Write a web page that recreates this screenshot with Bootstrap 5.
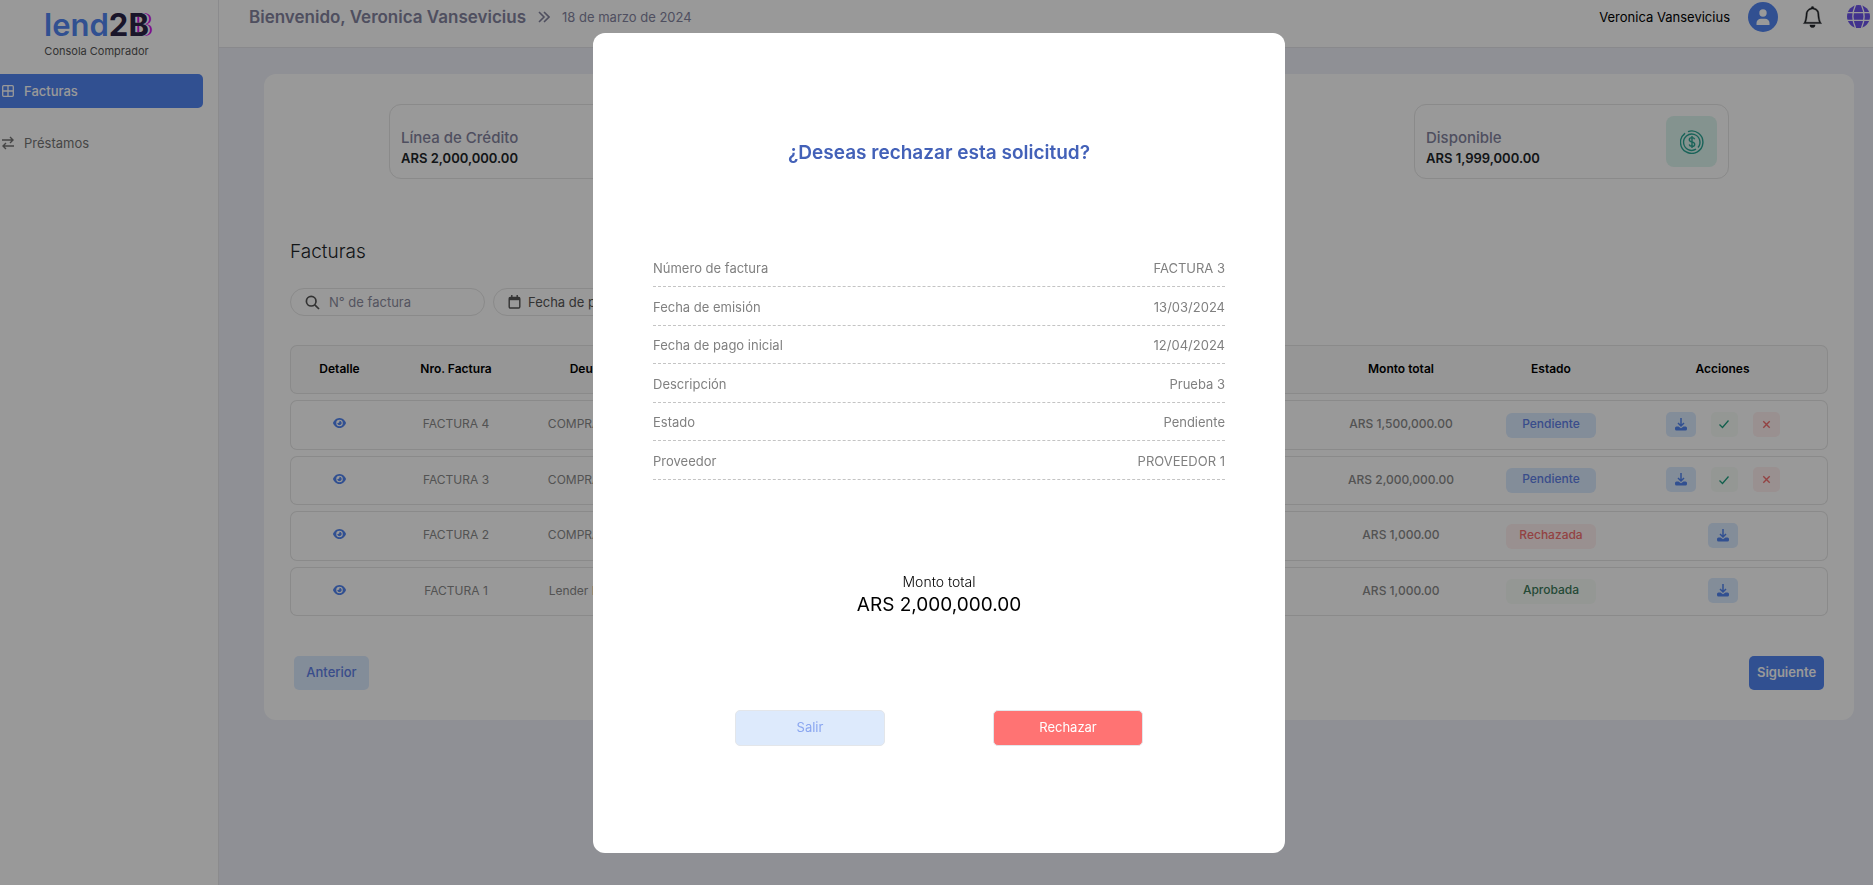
<!DOCTYPE html>
<html lang="es">
<head>
<meta charset="utf-8">
<meta name="viewport" content="width=device-width, initial-scale=1">
<title>lend2B - Consola Comprador</title>
<link href="https://cdn.jsdelivr.net/npm/bootstrap@5.3.0/dist/css/bootstrap.min.css" rel="stylesheet">
<style>
  :root { --brand: #5285f2; --soft: #dbebff; --line: #e6e6e6; --muted: #84849f; --text: #8a8a8a; }
  body { font-family: Inter, "Liberation Sans", sans-serif; font-size: 13px; line-height: 20px; background: #eff1f8; color: #212529; overflow: hidden; }
  svg { display: block; flex: none; }
  a { text-decoration: none; }

  .side-panel { width: 219px; background: #fff; border-right: 1px solid #e8e8ec; }
  .brand-box { padding: 8px 25px 0 0; }
  .brand-name { font-size: 31px; line-height: 34px; font-weight: 600; color: var(--brand); }
  .brand-two { color: #2b2346; font-weight: 700; }
  .brand-b { text-shadow: 2px 0 #fff, 4px 0 #d312e8; }
  .brand-sub { font-size: 11px; line-height: 18px; font-weight: 400; color: #555; }
  .side-nav { margin-top: 14px; gap: 18px; }
  .side-link { height: 34px; width: 203px; padding-left: 2px; gap: 10px; border-radius: 0 5px 5px 0; color: #757575; }
  .side-link.active { background: var(--brand); color: #fff; font-weight: 500; }

  .top-bar { height: 48px; padding: 0 3px 14px 30px; background: #fff; border-bottom: 1px solid #e4e4ea; color: var(--muted); }
  .welcome { font-size: 17px; font-weight: 600; }
  .crumb { gap: 12px; }
  .account { gap: 18px; }
  .icon-btn { background: none; border: 0; padding: 0; }
  .avatar { width: 30px; height: 30px; background: var(--brand); color: #fff; }

  .board { margin: 26px 19px 0 45px; padding: 30px 26px; border-radius: 12px; background: #fff; }
  .stats { padding: 0 99px; margin-bottom: 59px; }
  .stat { width: 315px; height: 75px; padding: 0 11px; border: 1px solid var(--line); border-radius: 12px; }
  .stat-text { padding-top: 12px; }
  .stat-name { font-size: 15px; font-weight: 500; color: var(--muted); }
  .stat-sum { font-weight: 600; }
  .stat-icon { width: 51px; height: 51px; border-radius: 8px; background: #dcf5ee; color: #2aa594; }
  .board-title { font-size: 19px; line-height: 28px; font-weight: 300; margin-bottom: 22px; }
  .pill { height: 28px; border: 1px solid var(--line); border-radius: 14px; background: #fff; padding: 0 14px; gap: 7px; color: #555; }
  .pill input { border: 0; outline: 0; background: none; min-width: 0; padding: 0; }
  .pill input::placeholder { color: #8d8da0; opacity: 1; }
  .search-pill { width: 195px; gap: 9px; }
  .date-pill { width: 180px; }

  .invoices { table-layout: fixed; width: 100%; border-collapse: separate; border-spacing: 0 6px; font-size: 12px; text-align: center; margin-top: 23px; }
  .invoices th { height: 49px; background: #fafafa; font-weight: 600; color: #000; padding: 0 0 1px; }
  .invoices td { height: 50px; padding: 0 0 2px; color: var(--text); white-space: nowrap; }
  .invoices tr:nth-child(even) td { height: 49px; }
  .invoices .sum, .invoices .state { font-weight: 500; }
  .invoices th, .invoices td { border: 1px solid var(--line); border-width: 1px 0; }
  .invoices tr > :first-child { border-left-width: 1px; border-radius: 7px 0 0 7px; }
  .invoices tr > :last-child { border-right-width: 1px; border-radius: 0 7px 7px 0; }
  .eye { color: var(--brand); padding-top: 4px; }
  .state { width: 90px; height: 25px; line-height: 22px; border-radius: 6px; margin-top: 2px; }
  .state-wait { background: var(--soft); color: #6080e8; }
  .state-no { background: #fff0f0; color: #f56f6f; }
  .state-ok { background: #f7fcf7; color: #3d7a5a; }
  .acts { gap: 15px; }
  .act { height: 25px; width: 27px; border: 0; border-radius: 5px; padding: 0; }
  .act-get { width: 30px; background: var(--soft); color: var(--brand); }
  .act-yes { background: #f7fcf7; color: #1fa080; }
  .act-no { background: #fff0f0; color: #f56f6f; }
  .pager { padding: 0 4px; margin-top: 34px; }
  .page-btn { width: 75px; height: 34px; padding: 0; font-size: 13px; font-weight: 500; border: 0; border-radius: 5px; }
  .page-prev, .page-prev:hover { background: var(--soft); color: #6080e8; }
  .page-next, .page-next:hover { background: var(--brand); color: #fff; font-weight: 600; }

  .shade { background: rgba(0,0,0,.4); padding-left: 5px; }
  .shade .modal-dialog { max-width: 692px; }
  .shade .modal-content { border: 0; border-radius: 12px; padding: 105px 60px 107px; }
  .ask { font-size: 19px; line-height: 30px; font-weight: 600; color: #4361b8; margin-bottom: 81px; }
  .facts > div { border-bottom: 1px dashed #c4c4c4; padding: 9px 0 8px; color: #808080; }
  .facts > div:nth-child(even) { padding-top: 10px; }
  .total { margin-top: 92px; margin-bottom: 92px; }
  .total-name { font-size: 14px; font-weight: 300; }
  .total-sum { font-size: 19px; line-height: 26px; }
  .choices { padding: 0 28px; }
  .choice { width: 150px; height: 36px; padding: 0; font-size: 13px; border: 1px solid #e3e6ea; border-radius: 5px; }
  .choice-out, .choice-out:hover { background: #ddeafc; color: #8aa6f0; }
  .choice-no, .choice-no:hover { background: #ff7373; color: #fff; }
</style>
</head>
<body>
<svg class="d-none" aria-hidden="true">
  <symbol id="i-eye" viewBox="0 0 576 512"><path fill="currentColor" d="M288 32c-80.800 0-145.500 36.800-192.600 80.600C48.600 156 17.300 208 2.500 243.700c-3.300 7.900-3.300 16.700 0 24.600C17.300 304 48.600 356 95.400 399.400C142.500 443.200 207.200 480 288 480s145.500-36.800 192.600-80.600c46.800-43.500 78.100-95.400 93-131.100c3.300-7.900 3.300-16.700 0-24.600c-14.900-35.700-46.200-87.700-93-131.100C433.500 68.800 368.800 32 288 32zM144 256a144 144 0 1 1 288 0 144 144 0 1 1 -288 0zm144-64c0 35.300-28.700 64-64 64c-7.100 0-13.900-1.200-20.300-3.300c-5.500-1.800-11.900 1.600-11.700 7.400c.3 6.900 1.300 13.800 3.200 20.700c13.700 51.200 66.400 81.600 117.600 67.900s81.600-66.400 67.900-117.600c-11.100-41.500-47.800-69.400-88.600-71.100c-5.800-.2-9.200 6.100-7.400 11.700c2.100 6.400 3.300 13.200 3.300 20.300z"/></symbol>
  <symbol id="i-get" viewBox="0 0 12 13"><path fill="none" stroke="currentColor" stroke-width="1.500" d="M6 0v7.500M3 5l3 3 3-3"/><path fill="currentColor" d="M1.500 8.500h2L6 10.300l2.500-1.800h2A1.500 1.500 0 0 1 12 10v1a1.500 1.500 0 0 1-1.500 1.500h-9A1.500 1.500 0 0 1 0 11v-1a1.500 1.500 0 0 1 1.500-1.500z"/></symbol>
  <symbol id="i-yes" viewBox="0 0 12 12"><path fill="none" stroke="currentColor" stroke-width="1.300" d="M1.500 6.500l3 3 6-7"/></symbol>
  <symbol id="i-no" viewBox="0 0 12 12"><path fill="none" stroke="currentColor" stroke-width="1.500" d="M2.500 2.500l7 7M9.500 2.500l-7 7"/></symbol>
</svg>

<div class="d-flex min-vh-100">
  <aside class="side-panel flex-shrink-0">
    <div class="brand-box text-center">
      <div class="brand-name">lend<span class="brand-two">2<span class="brand-b">B</span></span></div>
      <div class="brand-sub">Consola Comprador</div>
    </div>
    <nav class="side-nav d-flex flex-column">
      <a href="#" class="side-link active d-flex align-items-center">
        <svg width="12" height="12" viewBox="0 0 12 12" fill="none" stroke="currentColor" stroke-width="1.300"><rect x=".7" y=".7" width="10.600" height="10.600" rx="1"/><path d="M6 1v10M1 6h10"/></svg>
        Facturas</a>
      <a href="#" class="side-link d-flex align-items-center">
        <svg width="12" height="14" viewBox="0 0 12 14" fill="none" stroke="currentColor" stroke-width="1.400"><path d="M0 4h11M8 1l3 3-3 3M12 10H1M4 7l-3 3 3 3"/></svg>
        Préstamos</a>
    </nav>
  </aside>

  <div class="flex-grow-1">
    <header class="top-bar d-flex align-items-center justify-content-between">
      <div class="crumb d-flex align-items-center">
        <span class="welcome">Bienvenido, Veronica Vansevicius</span>
        <svg width="12" height="12" viewBox="0 0 12 12" fill="none" stroke="currentColor" stroke-width="1.600"><path d="M1 1l5 5-5 5M6 1l5 5-5 5"/></svg>
        <span>18 de marzo de 2024</span>
      </div>
      <div class="d-flex align-items-center">
        <div class="account d-flex align-items-center me-4">
          <span class="text-black">Veronica Vansevicius</span>
          <button class="icon-btn avatar rounded-circle d-flex align-items-center justify-content-center" type="button" aria-label="Perfil">
            <svg width="14" height="16" viewBox="0 0 14 16" fill="currentColor"><circle cx="7" cy="4" r="3.700"/><path d="M.5 16v-2c0-2.500 2-4.200 4.500-4.200h4c2.500 0 4.500 1.700 4.500 4.200v2z"/></svg>
          </button>
        </div>
        <button class="icon-btn me-4 text-dark" type="button" aria-label="Notificaciones">
          <svg width="21" height="22" viewBox="0 0 16 16" fill="currentColor" stroke="currentColor" stroke-width=".3"><path d="M8 16a2 2 0 0 0 2-2H6a2 2 0 0 0 2 2zM8 1.918l-.797.161A4.002 4.002 0 0 0 4 6c0 .628-.134 2.197-.459 3.742-.16.767-.376 1.566-.663 2.258h10.244c-.287-.692-.502-1.490-.663-2.258C12.134 8.197 12 6.628 12 6a4.002 4.002 0 0 0-3.203-3.920L8 1.917zM14.220 12c.223.447.481.801.78 1H1c.299-.199.557-.553.78-1C2.680 10.200 3 6.880 3 6c0-2.420 1.720-4.440 4.005-4.901a1 1 0 1 1 1.990 0A5.002 5.002 0 0 1 13 6c0 .88.32 4.200 1.220 6z"/></svg>
        </button>
        <button class="icon-btn" type="button" aria-label="Idioma">
          <svg width="23" height="23" viewBox="0 0 23 23"><circle cx="11.500" cy="11.500" r="11.500" fill="#6d54ec"/><path fill="none" stroke="#fff" stroke-width="1.300" d="M0 7.700h23M0 15.300h23M8.500 0c-3.200 7-3.200 16 0 23M14.500 0c3.200 7 3.200 16 0 23"/></svg>
        </button>
      </div>
    </header>

    <main class="board">
      <div class="stats d-flex justify-content-between">
        <section class="stat d-flex align-items-center">
          <div class="stat-text"><div class="stat-name">Línea de Crédito</div><div class="stat-sum">ARS 2,000,000.00</div></div>
        </section>
        <section class="stat d-flex align-items-center justify-content-between">
          <div class="stat-text"><div class="stat-name">Disponible</div><div class="stat-sum">ARS 1,999,000.00</div></div>
          <div class="stat-icon d-flex align-items-center justify-content-center">
            <svg width="24" height="24" viewBox="0 0 24 24" fill="none" stroke="currentColor" stroke-width="1.400"><path d="M5 3.200A11.200 11.200 0 1 0 8 1.600M3 5.500L5 3.200"/><path d="M18 17.500A8.200 8.200 0 1 0 16 19.200"/><path d="M14.700 9.200c-.4-1-1.400-1.600-2.700-1.600-1.600 0-2.700.8-2.700 2.100 0 3 5.400 1.500 5.400 4.500 0 1.300-1.100 2.200-2.700 2.200-1.400 0-2.500-.7-2.800-1.900M12 6v12"/></svg>
          </div>
        </section>
      </div>

      <h1 class="board-title">Facturas</h1>
      <div class="d-flex gap-2">
        <label class="pill search-pill d-flex align-items-center">
          <svg width="15" height="15" viewBox="0 0 15 15" fill="none" stroke="currentColor" stroke-width="1.700"><circle cx="6.200" cy="6.200" r="4.800"/><path d="M9.800 9.800l4.200 4.200"/></svg>
          <input type="text" placeholder="N° de factura" aria-label="N° de factura">
        </label>
        <button class="pill date-pill d-flex align-items-center" type="button">
          <svg width="13" height="14" viewBox="0 0 13 14" fill="none" stroke="currentColor" stroke-width="1.400"><rect x="1.200" y="2.500" width="10.600" height="10.500" rx="1.200"/><path d="M1 4h11" stroke-width="2.400"/><path d="M3.800 0v3M9.200 0v3"/></svg>
          Fecha de pago</button>
      </div>

      <table class="invoices">
        <colgroup><col style="width:98px"><col style="width:136px"><col style="width:134px"><col><col style="width:166px"><col style="width:134px"><col style="width:210px"></colgroup>
        <thead><tr><th>Detalle</th><th>Nro. Factura</th><th>Deudor</th><th></th><th>Monto total</th><th>Estado</th><th>Acciones</th></tr></thead>
        <tbody id="rows"></tbody>
      </table>

      <div class="pager d-flex justify-content-between">
        <button class="btn page-btn page-prev" type="button">Anterior</button>
        <button class="btn page-btn page-next" type="button">Siguiente</button>
      </div>
    </main>
  </div>
</div>

<div class="modal shade d-block" role="dialog" aria-modal="true" aria-labelledby="ask">
  <div class="modal-dialog modal-dialog-centered">
    <div class="modal-content">
      <h2 class="ask text-center" id="ask">¿Deseas rechazar esta solicitud?</h2>
      <div class="facts">
        <div class="d-flex justify-content-between"><span>Número de factura</span><span>FACTURA 3</span></div>
        <div class="d-flex justify-content-between"><span>Fecha de emisión</span><span>13/03/2024</span></div>
        <div class="d-flex justify-content-between"><span>Fecha de pago inicial</span><span>12/04/2024</span></div>
        <div class="d-flex justify-content-between"><span>Descripción</span><span>Prueba 3</span></div>
        <div class="d-flex justify-content-between"><span>Estado</span><span>Pendiente</span></div>
        <div class="d-flex justify-content-between"><span>Proveedor</span><span>PROVEEDOR 1</span></div>
      </div>
      <div class="total text-center text-black">
        <div class="total-name">Monto total</div>
        <div class="total-sum">ARS 2,000,000.00</div>
      </div>
      <div class="choices d-flex justify-content-around">
        <button class="btn choice choice-out" type="button">Salir</button>
        <button class="btn choice choice-no" type="button">Rechazar</button>
      </div>
    </div>
  </div>
</div>

<script src="https://cdn.jsdelivr.net/npm/bootstrap@5.3.0/dist/js/bootstrap.bundle.min.js"></script>
<script>
  const invoices = [
    ['FACTURA 4', 'COMPRADOR 1', 'ARS 1,500,000.00', 'Pendiente', 'wait'],
    ['FACTURA 3', 'COMPRADOR 1', 'ARS 2,000,000.00', 'Pendiente', 'wait'],
    ['FACTURA 2', 'COMPRADOR 1', 'ARS 1,000.00', 'Rechazada', 'no'],
    ['FACTURA 1', 'Lender Demo 1', 'ARS 1,000.00', 'Aprobada', 'ok']
  ];
  const action = (kind, label, w, h) =>
    `<button class="act act-${kind} d-flex align-items-center justify-content-center" type="button" aria-label="${label}"><svg width="${w}" height="${h}"><use href="#i-${kind}"/></svg></button>`;
  document.getElementById('rows').innerHTML = invoices.map(([num, debtor, sum, state, kind]) => `
    <tr>
      <td><button class="icon-btn eye" type="button" aria-label="Ver detalle"><svg width="13" height="12"><use href="#i-eye"/></svg></button></td>
      <td>${num}</td><td>${debtor}</td><td></td><td class="sum">${sum}</td>
      <td><span class="state state-${kind} d-inline-block">${state}</span></td>
      <td><div class="acts d-flex justify-content-center">${action('get', 'Descargar', 12, 13)}${kind === 'wait' ? action('yes', 'Aprobar', 12, 12) + action('no', 'Rechazar', 11, 11) : ''}</div></td>
    </tr>`).join('');
</script>
</body>
</html>
